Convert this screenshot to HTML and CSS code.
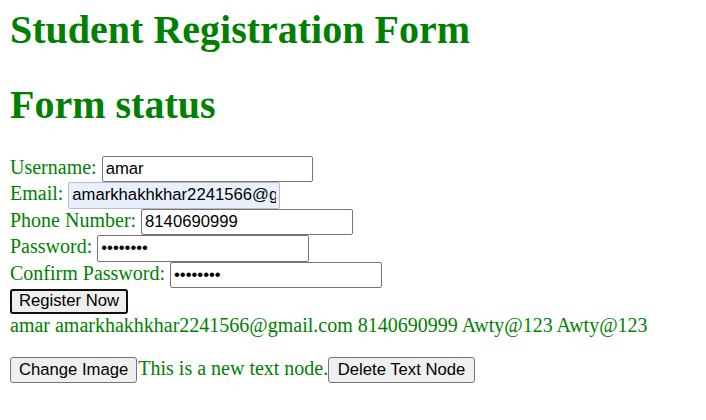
FILE: index.html
```html
<!DOCTYPE html>
<html lang="en">
<head>
<meta charset="utf-8">
<title>Student Registration Form</title>
<link rel="stylesheet" href="styles.css">
</head>
<body>
<div class="page">
  <h1 class="heading title">Student Registration Form</h1>
  <h1 class="heading status">Form status</h1>
  <form class="form">
    <div class="row"><label class="label" for="u">Username:</label> <input class="field" id="u" type="text" value="amar"></div>
    <div class="row"><label class="label" for="e">Email:</label> <input class="field autofill" id="e" type="text" value="amarkhakhkhar2241566@gmail.com"></div>
    <div class="row"><label class="label" for="p">Phone Number:</label> <input class="field" id="p" type="text" value="8140690999"></div>
    <div class="row"><label class="label" for="pw">Password:</label> <input class="field" id="pw" type="password" value="Awty@123"></div>
    <div class="row"><label class="label" for="cpw">Confirm Password:</label> <input class="field" id="cpw" type="password" value="Awty@123"></div>
    <div class="row"><button class="btn btn-focus" type="button">Register Now</button></div>
  </form>
  <p class="output">amar amarkhakhkhar2241566@gmail.com 8140690999 Awty@123 Awty@123</p>
  <div class="actions"><button class="btn" type="button">Change Image</button><span class="node">This is a new text node.</span><button class="btn btn-wide" type="button">Delete Text Node</button></div>
</div>
</body>
</html>
```
FILE: styles.css
```css
html, body {
  margin: 0;
  padding: 0;
  background: #ffffff;
}

.page {
  padding: 0 10px;
  font-family: "Liberation Serif", "Times New Roman", serif;
  font-size: 20px;
  line-height: 23px;
  color: #008000;
}

.heading {
  font-size: 40px;
  line-height: 46px;
  font-weight: bold;
  color: #008000;
}

.title {
  margin: 7px 0 29px;
}

.status {
  margin: 0 0 27.5px;
}

.form {
  margin: 0;
}

.row {
  display: block;
}

.label {
  color: #008000;
}

.field {
  box-sizing: border-box;
  width: 211.5px;
  height: 26.5px;
  margin: 0;
  padding: 1px 3px;
  border: 1px solid #767676;
  border-radius: 2px;
  background: #ffffff;
  color: #000000;
  font-family: "Liberation Sans", Arial, sans-serif;
  font-size: 16.67px;
  vertical-align: baseline;
  outline: none;
}

.autofill {
  background: #e8f0fe;
  border-color: #b8bcc4;
}

.btn {
  box-sizing: border-box;
  height: 26px;
  margin: 0;
  padding: 1px 8px;
  border: 1px solid #767676;
  border-radius: 3px;
  background: #efefef;
  color: #000000;
  font-family: "Liberation Sans", Arial, sans-serif;
  font-size: 16.67px;
  line-height: normal;
}

.btn-wide {
  padding: 1px 8.5px;
}

.btn-focus {
  height: 25px;
  border: 2px solid #101010;
  padding: 0 7px;
}

.output {
  margin: 0 0 20.5px;
}

.actions {
  display: flex;
  align-items: baseline;
}

.node {
  margin-left: 1px;
  color: #008000;
}
```
